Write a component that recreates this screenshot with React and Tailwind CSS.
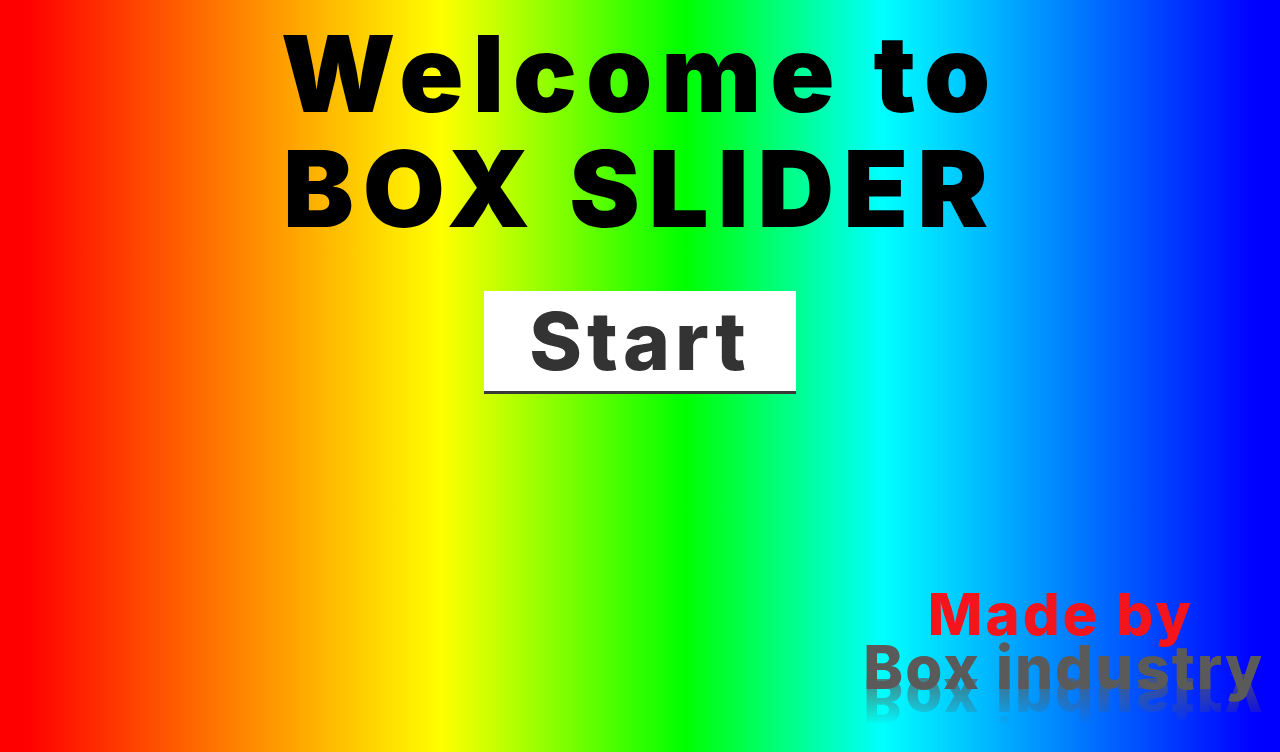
export default function App() {
  return (
    <div className="flex h-[752px] w-full flex-col overflow-hidden bg-[linear-gradient(90deg,#ff0000_0%,#ff0000_2%,#ffff00_34.5%,#00ff00_53.5%,#00ffff_69%,#0000ff_98%,#0000ff_100%)] font-['Inter','Liberation_Sans',sans-serif]">
      <h1 className="mt-[16px] text-center text-[106px] font-black leading-[115px] tracking-[9px] text-black">
        Welcome to
        <br />
        BOX SLIDER
      </h1>

      <div className="mt-[45px] flex justify-center">
        <button className="h-[103px] w-[312px] border-b-[3px] border-[#3a3a3a] bg-white text-[80px] font-extrabold leading-none tracking-[5px] text-[#333333]">
          Start
        </button>
      </div>

      <div className="mt-auto mb-[58px] mr-[16px] flex flex-col items-end">
        <p className="mr-[70px] text-[58px] font-extrabold leading-[52px] tracking-[3px] text-[#f4141c]">
          Made by
        </p>
        <p className="text-[60px] font-extrabold leading-[54px] tracking-[2px] text-[#5a5a5a] [-webkit-box-reflect:below_-20px_linear-gradient(transparent_5%,rgba(0,0,0,0.8))]">
          Box industry
        </p>
      </div>
    </div>
  );
}
